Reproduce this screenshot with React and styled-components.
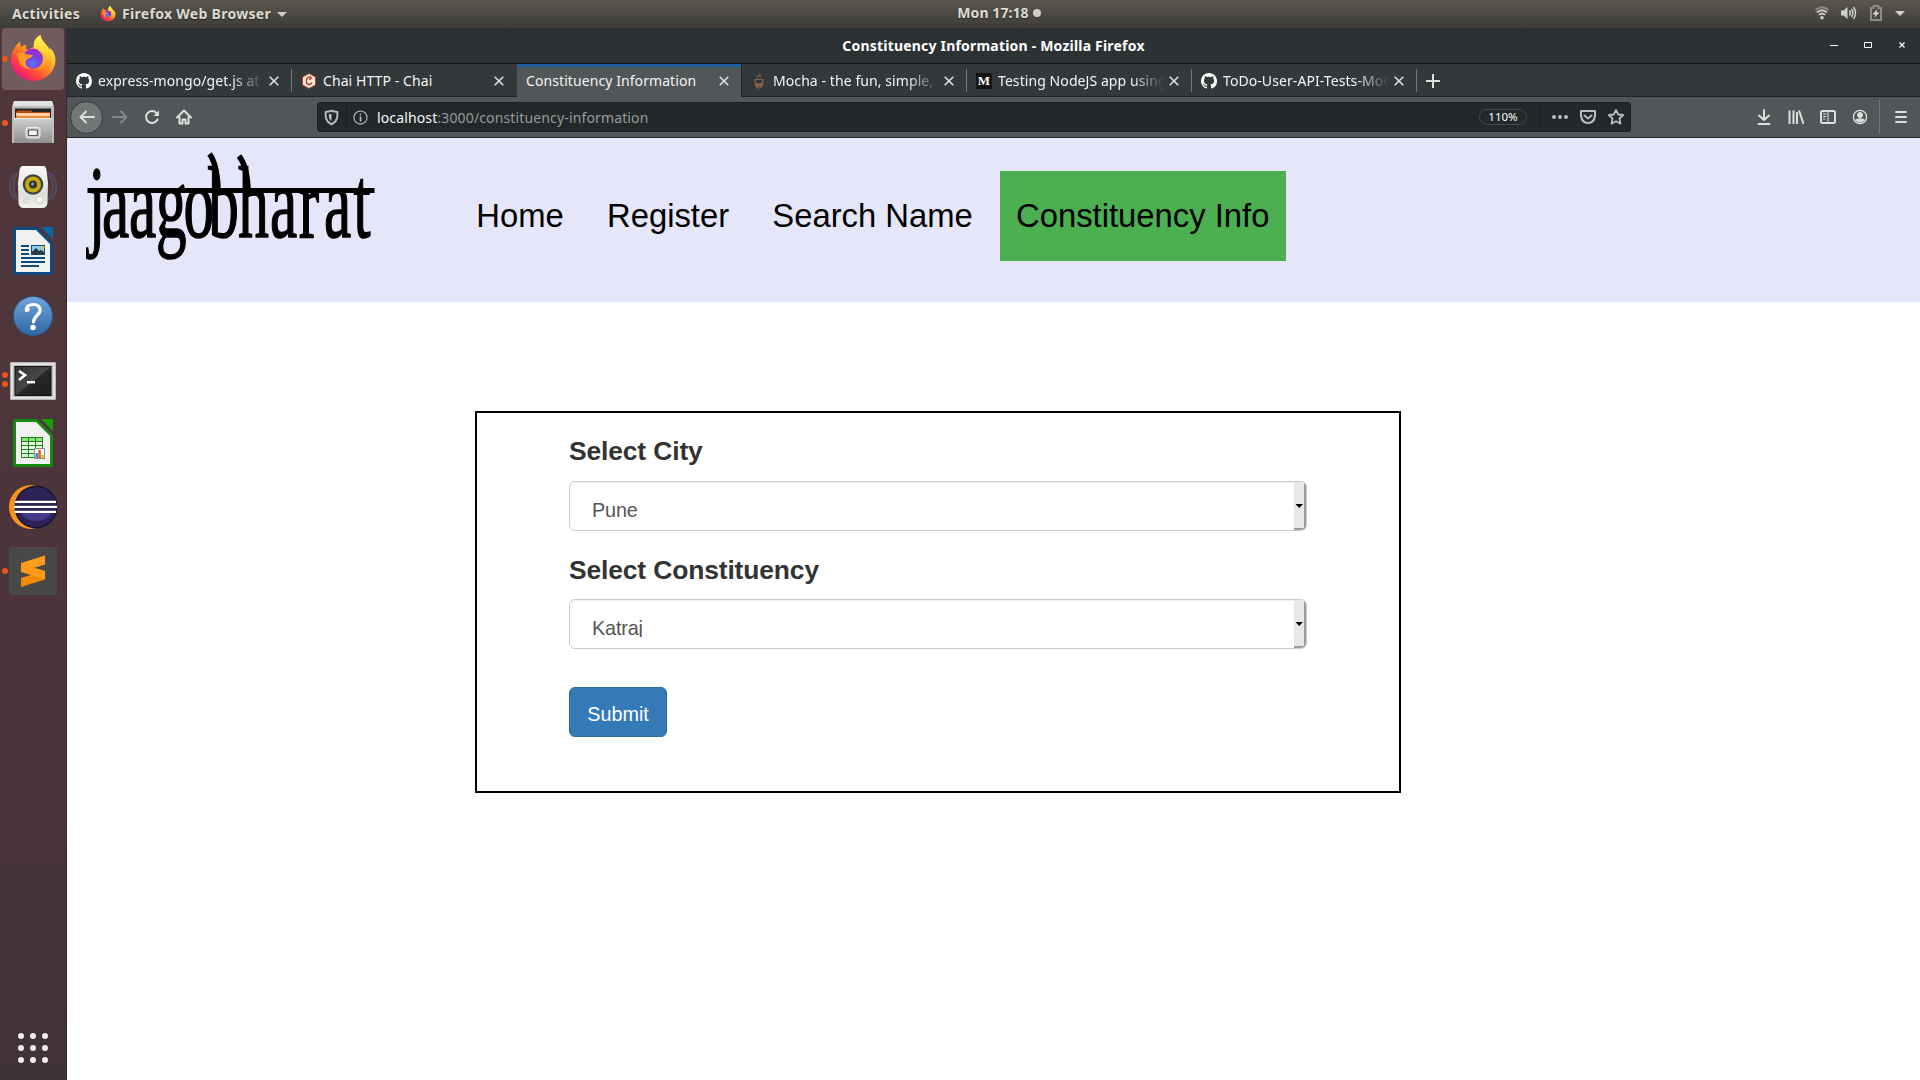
import React from "react";
import styled, { createGlobalStyle, css } from "styled-components";

const Global = createGlobalStyle`
  * { box-sizing: border-box; }
  html, body { margin: 0; padding: 0; background: #fff; }
  svg { display: block; flex: none; }
`;

const uiFont = `"Noto Sans", "Open Sans", sans-serif`;
const pageFont = `"Liberation Sans", Arial, sans-serif`;

const Desktop = styled.div`
  width: 1920px;
  height: 1080px;
  display: flex;
  flex-direction: column;
  overflow: hidden;
  font-family: ${uiFont};
`;

/* ---------- system bar ---------- */
const SystemBar = styled.header`
  height: 28px;
  flex: none;
  display: grid;
  grid-template-columns: 1fr auto 1fr;
  align-items: center;
  background: linear-gradient(#59564e, #3d3c37);
  color: #dfdbd2;
  font-size: 14px;
  font-weight: 700;
  line-height: 28px;
  letter-spacing: 0.3px;
  text-shadow: 0 1px 1px rgba(0, 0, 0, 0.5);
`;
const SystemLeft = styled.div`
  display: flex;
  align-items: center;
  padding-left: 12px;
`;
const SystemLabel = styled.span`
  white-space: nowrap;
`;
const AppMenu = styled.div`
  display: flex;
  align-items: center;
  margin-left: 20px;
  gap: 6px;
`;
const Clock = styled.div`
  display: flex;
  align-items: center;
  gap: 4px;
  margin-left: 78px;
  line-height: 26px;
  padding-bottom: 2px;
  letter-spacing: 0.08px;
`;
const ClockDot = styled.span`
  width: 8px;
  height: 8px;
  border-radius: 50%;
  background: #d2d0cb;
`;
const SystemRight = styled.div`
  display: flex;
  align-items: center;
  justify-content: flex-end;
  gap: 12px;
  padding: 0 15px 2px 0;
`;

const Workspace = styled.div`
  flex: 1;
  display: flex;
  min-height: 0;
`;

/* ---------- launcher ---------- */
const Launcher = styled.nav`
  width: 67px;
  flex: none;
  display: flex;
  flex-direction: column;
  gap: 2px;
  background: linear-gradient(#50363b 0%, #4b353a 60%, #45333a 90%, #403335 100%);
  border-right: 1px solid #33292c;
`;
const Slot = styled.div`
  width: 62px;
  height: 62px;
  margin-left: 2px;
  display: flex;
  align-items: center;
  border-radius: 4px;
  background: ${(p) => (p.$active ? "#705b5f" : "transparent")};
`;
const Dots = styled.div`
  width: 7px;
  display: flex;
  flex-direction: column;
  gap: 3px;
`;
const RunDot = styled.i`
  width: 6px;
  height: 6px;
  border-radius: 50%;
  background: #e95420;
`;
const AppGrid = styled.div`
  margin: auto 0 17px 18px;
  display: grid;
  grid-template-columns: repeat(3, 6px);
  gap: 6px;
`;
const GridDot = styled.i`
  width: 6px;
  height: 6px;
  border-radius: 50%;
  background: #f0eeec;
`;

/* ---------- browser window ---------- */
const Browser = styled.main`
  flex: 1;
  min-width: 0;
  display: flex;
  flex-direction: column;
  background: #fff;
`;
const TitleBar = styled.div`
  height: 36px;
  flex: none;
  display: grid;
  grid-template-columns: 1fr auto 1fr;
  align-items: center;
  background: #2c3133;
  border-bottom: 1px solid #101314;
  color: #fff;
  font-size: 14px;
  font-weight: 700;
`;
const WindowTitle = styled.div`
  white-space: nowrap;
  letter-spacing: 0.2px;
  line-height: 24px;
`;
const WindowButtons = styled.div`
  display: flex;
  justify-content: flex-end;
  align-items: center;
  gap: 26px;
  padding: 0 14px 1px 0;
`;
const TabStrip = styled.div`
  height: 33px;
  flex: none;
  display: flex;
  background: #33383b;
  box-shadow: inset 0 -1px #1f2325;
`;
const TabBox = styled.div`
  width: 225px;
  height: 33px;
  display: flex;
  align-items: center;
  padding: 0 13px 0 9px;
  color: #f3f3f3;
  background:
    ${(p) => (p.$divider ? "linear-gradient(#74787a, #74787a) 224px 5px / 1px 23px no-repeat" : "none")};
  ${(p) =>
    p.$active &&
    css`
      background: #515658;
      box-shadow: inset 0 3px #215d9c, inset 0 1px #17498a;
      border-right: 1px solid #24282a;
      padding-right: 12px;
    `}
`;
const TabText = styled.span`
  flex: 1;
  min-width: 0;
  margin: 1px 5px 0 ${(p) => (p.$icon ? 6 : 0)}px;
  overflow: hidden;
  white-space: nowrap;
  font-size: 14px;
  line-height: 24px;
  letter-spacing: 0.08px;
  ${(p) =>
    p.$fade &&
    css`
      mask-image: linear-gradient(to left, transparent, #000 32px);
    `}
`;
const NewTab = styled.div`
  width: 32px;
  display: flex;
  align-items: center;
  justify-content: center;
`;
const Toolbar = styled.div`
  height: 41px;
  flex: none;
  display: flex;
  align-items: center;
  background: #515658;
  border-bottom: 1px solid #1f2325;
  padding-left: 4px;
`;
const BackButton = styled.div`
  width: 33px;
  height: 33px;
  margin-left: -1px;
  margin-right: 1px;
  border-radius: 50%;
  border: 1px solid #36393b;
  background: #727677;
  display: flex;
  align-items: center;
  justify-content: center;
`;
const ToolSlot = styled.div`
  width: ${(p) => p.$w || 32}px;
  height: 32px;
  display: flex;
  align-items: center;
  justify-content: center;
`;
const AddressBar = styled.div`
  width: 1314px;
  height: 30px;
  margin-left: 117px;
  display: flex;
  align-items: center;
  border-radius: 3px;
  background: #23282a;
  border: 1px solid #1c2022;
  padding-left: 5px;
`;
const BarRule = styled.i`
  width: 1px;
  height: ${(p) => p.$h || 22}px;
  margin: ${(p) => p.$margin || 0};
  background: ${(p) => p.$color || "#1a1e20"};
`;
const Address = styled.div`
  flex: 1;
  padding: 1px 0 0 9px;
  color: #989a9b;
  font-size: 14px;
  line-height: 27px;
  white-space: nowrap;
  letter-spacing: 0.14px;
`;
const Host = styled.span`
  color: #f7f7f7;
`;
const ZoomBadge = styled.div`
  width: 48px;
  height: 16px;
  border: 1px solid #42474a;
  border-radius: 8px;
  margin-right: 12px;
  color: #fff;
  font-size: 11.5px;
  line-height: 14px;
  text-align: center;
`;
const PageActions = styled.div`
  display: flex;
  margin-left: 6px;
`;
const ToolbarEnd = styled.div`
  display: flex;
  align-items: center;
  margin-left: auto;
  padding-right: 3px;
`;

/* ---------- web page ---------- */
const SiteHeader = styled.header`
  height: 164px;
  flex: none;
  display: flex;
  align-items: flex-start;
  background: #e6e6fa;
`;
const Menu = styled.nav`
  display: flex;
  gap: 11.2px;
  margin: 33px 0 0 73.3px;
`;
const MenuLink = styled.a`
  height: 90px;
  padding: 0 16px;
  color: #000;
  font: 32.8px/90px ${pageFont};
  white-space: nowrap;
  ${(p) =>
    p.$active &&
    css`
      padding-right: 16.8px;
      background: #4caf50;
    `}
`;
const FormCard = styled.form`
  width: 926px;
  height: 382px;
  margin: 109px 0 0 408px;
  padding: 19px 92px;
  border: 2px solid #000;
  font-family: ${pageFont};
`;
const FieldLabel = styled.label`
  display: block;
  margin-bottom: ${(p) => p.$gap}px;
  color: #333;
  font-size: 26.4px;
  font-weight: 700;
  line-height: 38px;
  letter-spacing: -0.12px;
`;
const SelectBox = styled.div`
  width: 738px;
  height: 50px;
  margin-bottom: ${(p) => p.$gap}px;
  display: flex;
  justify-content: space-between;
  border: 1px solid #ccc;
  border-radius: 6px;
  box-shadow: inset 0 1px 1px rgba(0, 0, 0, 0.075);
  overflow: hidden;
  color: #555;
`;
const SelectValue = styled.span`
  height: 37px;
  padding: 17px 0 0 22px;
  overflow: hidden;
  font-size: 19.8px;
  line-height: 22px;
  letter-spacing: -0.15px;
`;
const SelectArrow = styled.span`
  width: 12px;
  display: flex;
  align-items: center;
  justify-content: center;
  padding-top: 2px;
  background: #e8e8e7;
  border-right: 2px solid #9b9b9b;
  border-bottom: 2px solid #9b9b9b;
`;
const SubmitButton = styled.button`
  width: 98px;
  height: 50px;
  display: block;
  padding: 4px 0 0;
  border: 1px solid #2e6da4;
  border-radius: 6px;
  background: #337ab7;
  color: #fff;
  font: 19.8px/26px ${pageFont};
`;

/* ---------- icons ---------- */
const FirefoxIcon = ({ size = 48, id }) => (
  <svg width={size} height={size} viewBox="0 0 48 48">
    <defs>
      <linearGradient id={id + "a"} x1="0.85" y1="0.1" x2="0.2" y2="0.95">
        <stop offset="0" stopColor="#fff44f" />
        <stop offset="0.3" stopColor="#ffbd2e" />
        <stop offset="0.55" stopColor="#ff7a22" />
        <stop offset="0.78" stopColor="#ff3b47" />
        <stop offset="1" stopColor="#e31587" />
      </linearGradient>
      <linearGradient id={id + "b"} x1="0.5" y1="0" x2="0.6" y2="1">
        <stop offset="0" stopColor="#fff44f" />
        <stop offset="0.6" stopColor="#ffcf32" />
        <stop offset="1" stopColor="#ff8a1e" stopOpacity="0" />
      </linearGradient>
      <radialGradient id={id + "c"} cx="0.5" cy="0.75" r="0.75">
        <stop offset="0" stopColor="#6173ff" />
        <stop offset="0.5" stopColor="#7a3fe0" />
        <stop offset="1" stopColor="#a726cf" />
      </radialGradient>
    </defs>
    <path d="M2 25C2 17 5 12 11 6.500C11 9 11.500 11 12.500 12C14 10.500 15 10 17 9.500C16.500 12 17 14 18 15L25 12C24 7 27 2 31.500 0C32 5 36 8 39 12C40 13 40.500 14 41 15L41.500 13C45 17 46.500 21 46.500 25C46.500 37 36 46 24.500 46C12 46 2 37 2 25Z" fill={`url(#${id}a)`} />
    <path d="M25 12C24 7 27 2 31.500 0C32 5 36 8 39 12C43 17 44 25 40 33C41 26 37 18 31 16C28 15 26 14 25 12Z" fill={`url(#${id}b)`} />
    <circle cx="24" cy="23.500" r="10" fill={`url(#${id}c)`} />
    <path d="M8 19C12 17 16 18 18 19.500C20 20 22 19 24 20.500C23 23 19 23 17.500 25C15 28 18 33 22 33C17 35 11 31 10 26Z" fill="#ff9a22" />
    <path d="M29 16C34 18 36 25 33 31C31 34 27 35 23 35C34 37 39 27 36 20C34 17 32 16 29 16Z" fill="#ffb02a" opacity="0.75" />
  </svg>
);

const FilesIcon = () => (
  <svg width="48" height="48" viewBox="0 0 48 48">
    <defs>
      <linearGradient id="fl" x1="0" y1="0" x2="0" y2="1">
        <stop offset="0" stopColor="#d0d0d0" />
        <stop offset="1" stopColor="#8f8f8f" />
      </linearGradient>
    </defs>
    <path d="M5 2H43L45 8V44H3V8Z" fill="#bdbdbd" />
    <path d="M5 2H43L44.500 7H3.500Z" fill="#e2e2e2" />
    <rect x="6" y="9.500" width="36" height="11" fill="#222" />
    <path d="M7 13L9 11.500H22L24 13H41V20H7Z" fill="#bd4d13" />
    <rect x="7" y="14" width="34" height="2" fill="#f9c28e" />
    <rect x="7" y="16" width="34" height="4" fill="#ed8b32" />
    <rect x="8" y="15.500" width="32" height="1" fill="#fff" />
    <path d="M5 19H43V44H5Z" fill="url(#fl)" />
    <path d="M5 19H43V20H5Z" fill="#ededed" />
    <rect x="17" y="28.500" width="14" height="10.500" rx="2" fill="#c9c9c9" stroke="#eee" strokeWidth="1" />
    <rect x="19.500" y="31" width="9" height="5.500" rx="0.500" fill="#f4f4f4" stroke="#555" strokeWidth="1.200" />
  </svg>
);

const RhythmIcon = () => (
  <svg width="48" height="48" viewBox="0 0 48 48">
    <defs>
      <linearGradient id="rb" x1="0" y1="0" x2="0" y2="1">
        <stop offset="0" stopColor="#f7f7f5" />
        <stop offset="0.7" stopColor="#dededa" />
        <stop offset="1" stopColor="#f2f2f0" />
      </linearGradient>
    </defs>
    <g fill="none" stroke="#5a6593" strokeWidth="1.600" opacity="0.5">
      <path d="M6 10C-1 18 -1 28 6 36" />
      <path d="M9 9C3 18 3 28 9 37" />
      <path d="M42 10C49 18 49 28 42 36" />
      <path d="M39 9C45 18 45 28 39 37" />
    </g>
    <path d="M14 3H34Q37 3 37.500 7L39 20L38.500 40Q38 45 33 45H15Q10 45 9.500 40L9 20L10.500 7Q11 3 14 3Z" fill="url(#rb)" />
    <circle cx="24" cy="21.500" r="10.300" fill="#3d4246" />
    <circle cx="24" cy="21.500" r="8" fill="#c7aa0b" />
    <circle cx="24" cy="21.500" r="4" fill="#303538" />
    <circle cx="23.500" cy="21" r="1.500" fill="#999e9f" />
    <circle cx="30.500" cy="37" r="3.700" fill="#f8f8f8" stroke="#bdbdb9" strokeWidth="0.800" />
    <rect x="15" y="36" width="4" height="4" rx="1" fill="none" stroke="#ccccc8" />
  </svg>
);

const OfficeDoc = ({ edge, fold, children }) => (
  <svg width="48" height="48" viewBox="0 0 48 48">
    <path d="M6 0H28L44 16V46Q44 48 42 48H6Q4 48 4 46V2Q4 0 6 0Z" fill={edge} />
    <path d="M7 3H27L41 17V45H7Z" fill="#f1f1f1" />
    <path d="M32 0H43Q44 0 44 1V12Z" fill={fold} />
    {children}
  </svg>
);
const WriterIcon = () => (
  <OfficeDoc edge="#0c4c7c" fold="#0369a3">
    <g fill="#0c4c7c">
      <rect x="12" y="18" width="8" height="2" />
      <rect x="12" y="22" width="8" height="2" />
      <rect x="12" y="26" width="8" height="2" />
      <rect x="12" y="30" width="24" height="2" />
      <rect x="12" y="34" width="24" height="2" />
      <rect x="12" y="38" width="18" height="2" />
      <rect x="22" y="18" width="14" height="10" />
    </g>
    <rect x="23" y="19" width="12" height="8" fill="#8fcbee" />
    <path d="M23 27V25L27 21L30 24L32 23L35 25V27Z" fill="#30373b" />
    <circle cx="34" cy="20.500" r="1.600" fill="#f2c230" />
  </OfficeDoc>
);
const CalcIcon = () => (
  <OfficeDoc edge="#188813" fold="#16a200">
    <rect x="12" y="18" width="22" height="21" fill="#188813" />
    {[0, 1, 2, 3, 4].map((r) =>
      [0, 1, 2].map((c) => (
        <rect key={r + "-" + c} x={13 + c * 7} y={19 + r * 4} width="6" height="3" fill={r === 0 ? "#8ddd7e" : "#e6f7e2"} />
      ))
    )}
    <rect x="25.500" y="29.500" width="10" height="10" fill="#fff" stroke="#8a8a8a" />
    <rect x="26.500" y="34" width="2.500" height="5" fill="#2a97cf" />
    <rect x="29.300" y="31" width="2.500" height="8" fill="#e0601b" />
    <rect x="32.200" y="36" width="2.500" height="3" fill="#eab91c" />
  </OfficeDoc>
);

const HelpIcon = () => (
  <svg width="48" height="48" viewBox="0 0 48 48">
    <defs>
      <linearGradient id="hp" x1="0" y1="0" x2="0" y2="1">
        <stop offset="0" stopColor="#70a5da" />
        <stop offset="1" stopColor="#3067a5" />
      </linearGradient>
    </defs>
    <circle cx="24" cy="25" r="20" fill="#2c5a90" />
    <circle cx="24" cy="25" r="19" fill="url(#hp)" />
    <path d="M17.500 19.500C17 15.500 20 13.500 24.500 13.500C29 13.500 31.500 16.500 31 20C30.500 24 25 24.500 24.500 31" fill="none" stroke="#fff" strokeWidth="3.200" strokeLinecap="round" />
    <circle cx="18.500" cy="18.500" r="2.300" fill="#fff" />
    <circle cx="24" cy="36.500" r="2.800" fill="#fff" />
  </svg>
);

const TerminalIcon = () => (
  <svg width="48" height="48" viewBox="0 0 48 48">
    <defs>
      <linearGradient id="tm" x1="0" y1="0" x2="1" y2="1">
        <stop offset="0" stopColor="#333" />
        <stop offset="0.5" stopColor="#474747" />
        <stop offset="0.51" stopColor="#282828" />
        <stop offset="1" stopColor="#1d1d1d" />
      </linearGradient>
    </defs>
    <rect x="1" y="7" width="46" height="38" rx="1" fill="#b5b5b5" />
    <rect x="2" y="8" width="44" height="36" rx="1" fill="#e1e1e1" />
    <rect x="4" y="10" width="40" height="32" fill="#bbb" />
    <rect x="5.500" y="11" width="37" height="30" fill="#111" />
    <rect x="6.500" y="12" width="35" height="28" fill="url(#tm)" />
    <path d="M10 16L16 20L10 25" fill="none" stroke="#fff" strokeWidth="2.600" />
    <rect x="18" y="26" width="8" height="2.400" fill="#fff" />
  </svg>
);

const EclipseIcon = () => (
  <svg width="48" height="48" viewBox="0 0 48 48">
    <ellipse cx="22" cy="24" rx="22" ry="22" fill="#f7941e" />
    <circle cx="27" cy="24" r="21.500" fill="#18142f" />
    <circle cx="27" cy="24" r="20" fill="#2c2255" />
    <ellipse cx="27" cy="28" rx="15" ry="10" fill="#463a86" />
    <rect x="6" y="17" width="41" height="13" fill="#2c2255" />
    <g fill="#fff">
      <rect x="6" y="17.800" width="41" height="2.200" />
      <rect x="5" y="22.800" width="43" height="2.200" />
      <rect x="6" y="27.800" width="41" height="2.200" />
    </g>
  </svg>
);

const SublimeIcon = () => (
  <svg width="48" height="48" viewBox="0 0 48 48">
    <rect width="48" height="48" rx="2.500" fill="#484848" />
    <path d="M12 31L36 23.500V32.500L12 40Z" fill="#f18a05" />
    <path d="M12 16L36 8.500V17.500L12 25Z" fill="#ff9c1c" />
    <path d="M12 16.500L36 24V32L12 25Z" fill="#ff9a1a" />
  </svg>
);

const GithubIcon = () => (
  <svg width="16" height="16" viewBox="0 0 16 16" fill="#fff">
    <path d="M8 0C3.580 0 0 3.580 0 8c0 3.540 2.290 6.530 5.470 7.590.4.070.55-.17.55-.38 0-.19-.01-.82-.01-1.490-2.010.37-2.530-.49-2.690-.94-.09-.23-.48-.94-.82-1.130-.28-.15-.68-.52-.01-.53.63-.01 1.080.58 1.230.82.72 1.210 1.870.87 2.330.66.07-.52.28-.87.51-1.070-1.780-.2-3.640-.89-3.640-3.950 0-.87.31-1.590.82-2.150-.08-.2-.36-1.020.08-2.120 0 0 .67-.21 2.200.82.64-.18 1.320-.27 2-.27s1.360.09 2 .27c1.530-1.040 2.200-.82 2.200-.82.44 1.100.16 1.920.08 2.120.51.56.82 1.270.82 2.150 0 3.070-1.870 3.750-3.650 3.950.29.25.54.73.54 1.480 0 1.070-.01 1.930-.01 2.200 0 .21.15.46.55.38A8.010 8.010 0 0 0 16 8c0-4.420-3.580-8-8-8z" />
  </svg>
);
const ChaiIcon = () => (
  <svg width="16" height="16" viewBox="0 0 16 16">
    <path d="M8 0.500L14.500 4V12L8 15.500L1.500 12V4Z" fill="#f8e9d5" stroke="#a92c28" strokeWidth="0.800" />
    <path d="M10.500 5.500C10.500 3.500 7.500 3 6 5.500C4.500 8 5.500 11.500 8 11.500C9.300 11.500 10.500 10.500 11 9.500M8.500 7L9.500 5" fill="none" stroke="#b11f24" strokeWidth="1.300" />
  </svg>
);
const MochaIcon = () => (
  <svg width="16" height="16" viewBox="0 0 16 16" fill="none" stroke="#8d6748" strokeWidth="1.200">
    <path d="M3.500 6.500H12.500M4 6.500L4.500 11Q5 15 8 15Q11 15 11.500 11L12 6.500" />
    <path d="M5.500 10.500Q8 12 10.500 10.500L10 13H6Z" fill="#8d6748" />
    <path d="M7 4.500Q5.500 3.500 7.500 2.500M9 4.500Q10 3 8.300 0.800" />
  </svg>
);
const MediumBadge = styled.span`
  width: 16px;
  height: 16px;
  flex: none;
  background: #151515;
  color: #fff;
  font: 700 13px/16px "Liberation Serif", serif;
  text-align: center;
`;
const CloseIcon = () => (
  <svg width="10" height="10" viewBox="0 0 10 10" stroke="#dededd" strokeWidth="1.600">
    <path d="M0.700 0.700L9.300 9.300M9.300 0.700L0.700 9.300" />
  </svg>
);
const Glyph = ({ size = 16, color = "#dededd", width = 2, children }) => (
  <svg width={size} height={size} viewBox="0 0 16 16" fill="none" stroke={color} strokeWidth={width} strokeLinecap="round" strokeLinejoin="round">
    {children}
  </svg>
);

const Logo = () => (
  <svg width="320" height="164" viewBox="67 138 320 164">
    <g transform="scale(0.6 1)" fontFamily="Liberation Serif, serif" fontSize="102" fill="#000" stroke="#000" strokeWidth="1.600">
      <text y="237" x="147 170 215 260 306 347 397 450 498 540 589">jaagobharat</text>
    </g>
    <rect x="87.500" y="188" width="287" height="5" />
    <g fill="none" stroke="#000" strokeWidth="5.500">
      <path d="M209.500 154Q217 164 218 188" />
      <path d="M239 156Q247 166 248 188" />
    </g>
  </svg>
);

const tabs = [
  { title: "express-mongo/get.js at", icon: <GithubIcon />, divider: true, fade: true },
  { title: "Chai HTTP - Chai", icon: <ChaiIcon /> },
  { title: "Constituency Information", active: true },
  { title: "Mocha - the fun, simple, f", icon: <MochaIcon />, divider: true, fade: true },
  { title: "Testing NodeJS app using", icon: <MediumBadge>M</MediumBadge>, divider: true, fade: true },
  { title: "ToDo-User-API-Tests-Moc", icon: <GithubIcon />, divider: true, fade: true },
];

const apps = [
  { icon: <FirefoxIcon id="dock" />, dots: 1, active: true },
  { icon: <FilesIcon />, dots: 1 },
  { icon: <RhythmIcon />, dots: 0 },
  { icon: <WriterIcon />, dots: 0 },
  { icon: <HelpIcon />, dots: 0 },
  { icon: <TerminalIcon />, dots: 2 },
  { icon: <CalcIcon />, dots: 0 },
  { icon: <EclipseIcon />, dots: 0 },
  { icon: <SublimeIcon />, dots: 1 },
];

const Select = ({ value, gap }) => (
  <SelectBox $gap={gap}>
    <SelectValue>{value}</SelectValue>
    <SelectArrow>
      <svg width="8" height="4" viewBox="0 0 8 4"><path d="M0.500 0H8L4.250 4Z" /></svg>
    </SelectArrow>
  </SelectBox>
);

export default function App() {
  return (
    <Desktop>
      <Global />
      <SystemBar>
        <SystemLeft>
          <SystemLabel>Activities</SystemLabel>
          <AppMenu>
            <FirefoxIcon size={16} id="bar" />
            <SystemLabel>Firefox Web Browser</SystemLabel>
            <svg width="10" height="5" viewBox="0 0 10 5"><path d="M0 0H10L5 5Z" fill="#d2d0cb" /></svg>
          </AppMenu>
        </SystemLeft>
        <Clock>
          <SystemLabel>Mon 17:18</SystemLabel>
          <ClockDot />
        </Clock>
        <SystemRight>
          <svg width="14" height="14" viewBox="0 0 14 14" fill="none" stroke="#d2d0cb" strokeWidth="1.700">
            <path d="M0.500 4Q7 -1.500 13.500 4" opacity="0.45" />
            <path d="M2 6.500Q7 2 12 6.500M4 9Q7 6 10 9" />
            <circle cx="7" cy="11.800" r="1.800" fill="#d2d0cb" stroke="none" />
          </svg>
          <svg width="16" height="14" viewBox="0 0 16 14" fill="none" stroke="#d2d0cb" strokeWidth="1.500">
            <path d="M0 4.500H2.500L6.500 1V13L2.500 9.500H0Z" fill="#d2d0cb" stroke="none" />
            <path d="M8.500 4.500Q10 7 8.500 9.500M10.500 3Q13 7 10.500 11M12.500 1Q16.500 7 12.500 13" />
          </svg>
          <svg width="14" height="16" viewBox="1 0 14 16">
            <path d="M5.500 1H10.500V3H13V15H3V3H5.500Z" fill="none" stroke="#8d8b86" strokeWidth="2" />
            <path d="M9.500 4L4.500 9.500H7.500L6 13L11.500 7.500H8.500Z" fill="#dedcd7" />
          </svg>
          <svg width="10" height="5" viewBox="0 0 10 5"><path d="M0 0H10L5 5Z" fill="#d2d0cb" /></svg>
        </SystemRight>
      </SystemBar>
      <Workspace>
        <Launcher>
          {apps.map((app, i) => (
            <Slot key={i} $active={app.active}>
              <Dots>{Array.from({ length: app.dots }, (_, d) => <RunDot key={d} />)}</Dots>
              {app.icon}
            </Slot>
          ))}
          <AppGrid>{Array.from({ length: 9 }, (_, i) => <GridDot key={i} />)}</AppGrid>
        </Launcher>
        <Browser>
          <TitleBar>
            <span />
            <WindowTitle>Constituency Information - Mozilla Firefox</WindowTitle>
            <WindowButtons>
              <svg width="8" height="8" viewBox="0 0 8 8"><path d="M0 4.500H8" stroke="#fff" /></svg>
              <svg width="8" height="8" viewBox="0 0 8 8"><path d="M0.500 1.500H7.500V6.500H0.500Z" stroke="#fff" fill="none" /></svg>
              <svg width="8" height="8" viewBox="0 0 8 8"><path d="M1.500 1.500L6.500 6.500M6.500 1.500L1.500 6.500" stroke="#fff" strokeWidth="1.200" /></svg>
            </WindowButtons>
          </TitleBar>
          <TabStrip>
            {tabs.map((t) => (
              <TabBox key={t.title} $active={t.active} $divider={t.divider}>
                {t.icon}
                <TabText $icon={!!t.icon} $fade={t.fade}>{t.title}</TabText>
                <CloseIcon />
              </TabBox>
            ))}
            <NewTab>
              <svg width="14" height="14" viewBox="0 0 14 14" stroke="#dededd" strokeWidth="2"><path d="M7 0V14M0 7H14" /></svg>
            </NewTab>
          </TabStrip>
          <Toolbar>
            <BackButton><Glyph><path d="M15 8H1.500M7 2.500L1.500 8L7 13.500" /></Glyph></BackButton>
            <ToolSlot><Glyph color="#86898a"><path d="M1 8H14.500M9 2.500L14.500 8L9 13.500" /></Glyph></ToolSlot>
            <ToolSlot>
              <Glyph><path d="M13.500 10.500A6 6 0 1 1 12.500 4" /><path d="M15 1.500V7H9.500Z" fill="#dededd" stroke="none" /></Glyph>
            </ToolSlot>
            <ToolSlot>
              <Glyph><path d="M1 8.500L8 1.500L15 8.500M3.500 8V14.500H6.500V10.500H9.500V14.500H12.500V8" /></Glyph>
            </ToolSlot>
            <AddressBar>
              <Glyph color="#bcbebe" width={1.8} size={17}><path d="M2.500 2.700Q6 2.700 8 1.500Q10 2.700 13.500 2.700V7Q13 12 8 14.500Q3 12 2.500 7Z" /><path d="M8 4.500V11.500Q5.500 10 5.500 7V5Z" fill="#bcbebe" stroke="none" /></Glyph>
              <ToolSlot $w={13}><BarRule /></ToolSlot>
              <Glyph color="#bcbebe" width={1.2} size={15}><circle cx="8" cy="8" r="7" /><path d="M8 7.500V11.500M8 4.500V4.600" strokeWidth="1.800" /></Glyph>
              <Address><Host>localhost</Host>:3000/constituency-information</Address>
              <ZoomBadge>110%</ZoomBadge>
              <BarRule />
              <PageActions>
                <ToolSlot $w={28}><Glyph color="#bcbebe" width={0}><g fill="#bcbebe"><circle cx="2" cy="8" r="2" /><circle cx="8" cy="8" r="2" /><circle cx="14" cy="8" r="2" /></g></Glyph></ToolSlot>
                <ToolSlot $w={28}><Glyph color="#bcbebe"><path d="M1 2H15V7Q14 14 8 14Q2 14 1 7ZM4.500 6.500L8 9.500L11.500 6.500" /></Glyph></ToolSlot>
                <ToolSlot $w={28}><Glyph color="#bcbebe" width={1.8}><path d="M8 1L10.200 5.500L15.200 6L11.500 9.500L12.500 14.700L8 12.200L3.500 14.700L4.500 9.500L0.800 6L5.800 5.500Z" /></Glyph></ToolSlot>
              </PageActions>
            </AddressBar>
            <ToolbarEnd>
              <ToolSlot><Glyph><path d="M8 1V10.500M3 6.500L8 11L13 6.500M2.500 15H13.500" /></Glyph></ToolSlot>
              <ToolSlot><Glyph><path d="M1.500 1.500V15M5.500 1.500V15M9 3V15M11 1.500L15.500 15" strokeLinecap="butt" /></Glyph></ToolSlot>
              <ToolSlot><Glyph><rect x="1" y="2" width="14" height="12" rx="1.500" /><path d="M8 2V14" strokeWidth="1" /><path d="M3.500 5H6M3.500 7.500H6M3.500 10H5" strokeWidth="1" /></Glyph></ToolSlot>
              <ToolSlot><Glyph width={1.3}><circle cx="8" cy="8" r="6.600" /><circle cx="8" cy="6" r="2.300" fill="#dededd" /><path d="M4 10.800Q8 9 12 10.800Q10.500 13 8 13Q5.500 13 4 10.800Z" fill="#dededd" /></Glyph></ToolSlot>
              <BarRule $h={34} $color="#727677" $margin="0 5px 0 3px" />
              <ToolSlot><Glyph><path d="M3 3H13M3 8H13M3 13H13" /></Glyph></ToolSlot>
            </ToolbarEnd>
          </Toolbar>
          <SiteHeader>
            <Logo />
            <Menu>
              <MenuLink>Home</MenuLink>
              <MenuLink>Register</MenuLink>
              <MenuLink>Search Name</MenuLink>
              <MenuLink $active>Constituency Info</MenuLink>
            </Menu>
          </SiteHeader>
          <FormCard>
            <FieldLabel $gap={11}>Select City</FieldLabel>
            <Select value="Pune" gap={20} />
            <FieldLabel $gap={10}>Select Constituency</FieldLabel>
            <Select value="Katraj" gap={38} />
            <SubmitButton type="button">Submit</SubmitButton>
          </FormCard>
        </Browser>
      </Workspace>
    </Desktop>
  );
}
